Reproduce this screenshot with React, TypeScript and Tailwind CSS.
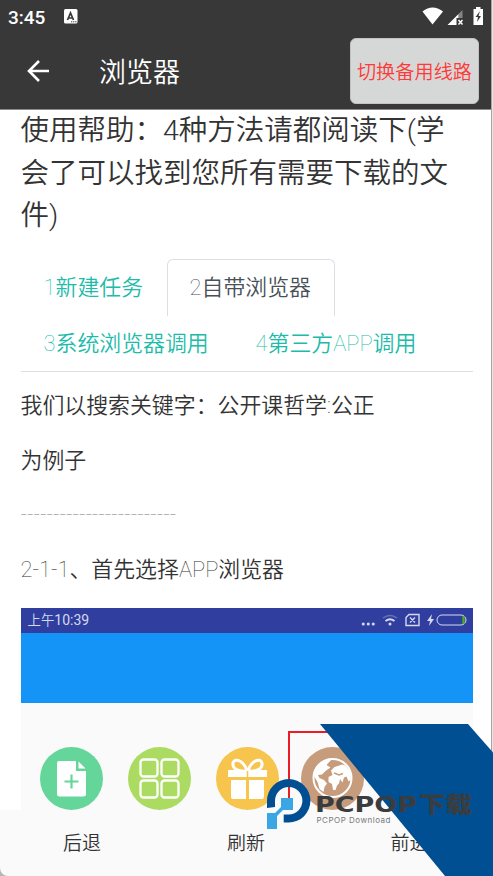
import React from 'react';

const paragraphs = [
    '我们以搜索关键字：公开课哲学:公正',
    '为例子',
    '------------------------',
    '2-1-1、首先选择APP浏览器',
];

// Latin runs are set in Roboto Thin, Chinese runs keep a book weight
const MixedText: React.FC<{ text: string }> = ({ text }) => (
    <span>
        {text.split(/([\x20-\x7e]+)/).filter(Boolean).map((run, i) => (
            <span key={i} className={/^[\x20-\x7e]/.test(run) ? 'font-thin' : 'font-[350]'}>{run}</span>
        ))}
    </span>
);

const StatusIcons: React.FC = () => (
    <svg width="66" height="20" viewBox="0 0 66 20">
        <path d="M1.500 4.500Q11.500-3.500 22 4.500L11.500 17.500Z" fill="#fff" />
        <path d="M41.500 3v8h-4V7Z" fill="#858585" />
        <path d="M26.500 18L37.500 7v4H35.500v7Z" fill="#fff" />
        <path d="M37.500 13l4 4.500m0-4.500l-4 4.500" stroke="#fff" strokeWidth="1.500" />
        <path d="M52.500 2h2.500V0h4.500v2H62v16h-9.500Z" fill="#fff" />
        <path d="M59 4l-4.500 6h2.500l-1 5 4-6h-2.500Z" fill="#383838" />
    </svg>
);

const StatusBar: React.FC = () => (
    <div className="flex h-[34px] items-center justify-between pl-2 pr-[4px] text-white">
        <div className="flex items-center gap-[18px]">
            <span className="w-[38px] text-[19px] font-medium leading-none">3:45</span>
            <svg className="mb-[2px]" width="14" height="15" viewBox="0 0 14 15">
                <rect width="13.500" height="14.500" rx="1.500" fill="#fff" />
                <path d="M3.500 11L6.500 4l3 7M4.500 9h4" stroke="#383838" strokeWidth="1.700" fill="none" />
                <path d="M7 12.800h5.500" stroke="#383838" strokeDasharray="1.300 0.800" />
            </svg>
        </div>
        <StatusIcons />
    </div>
);

const Header: React.FC = () => (
    <header className="h-[110px] shrink-0 border-b border-[#8c8c8c] bg-[#383838]">
        <StatusBar />
        <div className="flex h-[74px] items-center justify-between pl-[27px] pr-3">
            <div className="flex items-center gap-[49px]">
                <svg width="23" height="22" viewBox="0 0 23 22" fill="none" stroke="#fff" strokeWidth="2.600">
                    <path d="M12 1L2 11l10 10M2 11h20" />
                </svg>
                <h1 className="pt-[5px] text-[27px] font-[350] leading-none text-white">浏览器</h1>
            </div>
            <button className="h-[66px] w-[129px] whitespace-nowrap rounded-md border border-[#c2c4c3] bg-[#d6d8d7] pt-1 text-[19.200px] font-[350] leading-none text-[#ff3838]">
                切换备用线路
            </button>
        </div>
    </header>
);

const Tabs: React.FC = () => (
    <div className="flex flex-wrap border-b border-[#dadfe4] text-[21.900px] text-[#1cbbaa]">
        <div className="flex h-[56px] w-[146px] items-center pl-[23px] pt-[2px]"><MixedText text="1新建任务" /></div>
        <div className="flex h-[57px] w-[168px] items-center rounded-t-md border border-b-0 border-[#dadfe4] pl-[22px] text-[#495057]">
            <MixedText text="2自带浏览器" />
        </div>
        <div className="flex h-[55px] w-[212px] items-center pl-[23px] pt-[2px]"><MixedText text="3系统浏览器调用" /></div>
        <div className="flex h-[55px] w-[200px] items-center pl-[23px] pt-[2px]"><MixedText text="4第三方APP调用" /></div>
    </div>
);

const FileIcon: React.FC = () => (
    <svg width="63" height="63" viewBox="0 0 63 63">
        <circle cx="31.500" cy="31.500" r="31.500" fill="#64d69a" />
        <path d="M19 14h17v10h10v23a2.500 2.500 0 0 1-2.500 2.500H19.500A2.500 2.500 0 0 1 17 47V16a2 2 0 0 1 2-2Z" fill="#fff" />
        <path d="M38.500 14.500v7h7Z" fill="#fff" />
        <path d="M31.500 27.500v14m-7-7h14" stroke="#64d69a" strokeWidth="2.200" />
    </svg>
);

const GridIcon: React.FC = () => (
    <svg width="63" height="63" viewBox="0 0 63 63">
        <circle cx="31.500" cy="31.500" r="31.500" fill="#abdb61" />
        <g fill="none" stroke="#fff" strokeWidth="2.300">
            <rect x="12.500" y="12.500" width="17" height="17" rx="3" />
            <rect x="33.500" y="12.500" width="17" height="17" rx="3" />
            <rect x="12.500" y="33.500" width="17" height="17" rx="3" />
            <rect x="33.500" y="33.500" width="17" height="17" rx="3" />
        </g>
    </svg>
);

const GiftIcon: React.FC = () => (
    <svg width="63" height="63" viewBox="0 0 63 63">
        <circle cx="31.500" cy="31.500" r="31.500" fill="#f7c54d" />
        <path d="M12 23h39v7H12ZM15 33h15v19H17a2 2 0 0 1-2-2ZM33 33h15v17a2 2 0 0 1-2 2H33Z" fill="#fff" />
        <path d="M31 24C23 25 16 22 17 16c2-6 11-2 14 8ZM32 24c8 1 15-2 14-8-2-6-11-2-14 8Z" fill="none" stroke="#fff" strokeWidth="3" />
        <path d="M31.500 24v28" stroke="#f7c54d" strokeWidth="1.500" />
    </svg>
);

const GlobeIcon: React.FC = () => (
    <svg width="63" height="63" viewBox="0 0 63 63">
        <circle cx="31.500" cy="31.500" r="31.500" fill="#c69c7d" />
        <circle cx="31.500" cy="31" r="19" fill="none" stroke="#fff" strokeWidth="2" />
        <g fill="#fff">
            <path d="M16 19l6-5 8.500-1.500-5 5.500 4 2.500-5 3.500-3.500 3.500-4 .5 1.500 3 4.500 2 3 3.500-2.500 3.500-1 5-4-3-2-7-3-5-1-5Z" />
            <path d="M30 23.500l3.500-3.500 8-2.500 3 1 4.500 6 1 8-2.500 2-2-5-2.500 1-1.500 5-2.500-3.500-1 4.500-2 2-1.500 4.500h-2.500l-1-6-3.500-2v-5l4-2Z" />
        </g>
        <path d="M33 26l5 2 4-1.500" stroke="#c69c7d" strokeWidth="1.400" fill="none" />
    </svg>
);

const PhonePreview: React.FC = () => (
    <div className="h-[203px] bg-[#fafafa]">
        <div className="flex h-[25px] items-center justify-between bg-[#303f9f] pl-[7px] pr-[6px] text-[#d5d9ee]">
            <span className="text-[13.400px] font-[350] leading-none">上午<span className="text-[14px] font-normal">10:39</span></span>
            <svg width="106" height="16" viewBox="0 0 106 16" fill="none" stroke="#d5d9ee">
                <path d="M2.200 12h10.500" strokeWidth="3" strokeLinecap="round" strokeDasharray="0.100 4.900" />
                <path d="M22 6q7-5 14 0" stroke="#6975bb" strokeWidth="1.500" />
                <path d="M24.500 9q4.500-3.500 9 0" strokeWidth="1.800" />
                <circle cx="29" cy="12" r="1.500" fill="#d5d9ee" stroke="none" />
                <path d="M48 2.500h10v11H45V5.500ZM49 5.500l5 5m0-5l-5 5" strokeWidth="1.400" />
                <path d="M71 2l-5 7h3l-1 5 5-7h-3Z" fill="#d5d9ee" stroke="none" />
                <rect x="76" y="3" width="29" height="10" rx="5" />
                <path d="M102.500 4v8" stroke="#4caf20" strokeWidth="2.200" />
            </svg>
        </div>
        <div className="h-[70px] bg-[#1494f7]" />
        <div className="flex gap-[25px] pl-[19.500px] pt-[44px]">
            <FileIcon />
            <GridIcon />
            <GiftIcon />
            <div className="-ml-[3px]"><GlobeIcon /></div>
        </div>
    </div>
);

const Watermark: React.FC = () => (
    <svg className="absolute left-0 top-0" width="493" height="876" viewBox="0 0 493 876">
        <path d="M340 732H289V800" fill="none" stroke="#ed1c24" strokeWidth="2" />
        <path d="M320 724H468L493 752.500V876H445Z" fill="#004f92" />
        <path d="M267 808V800.800A21.700 21.700 0 1 1 288.700 822.500H283.700V814.500H288.700A13.700 13.700 0 1 0 275 800.800V807Z" fill="#004f92" />
        <path d="M281 798h12v12h-10l-6 6v13h-10v-16h8l6-6Z" fill="#3aa7e4" />
        <text x="315" y="811.500" textLength="102" lengthAdjust="spacingAndGlyphs" fontSize="21.500" fontWeight="700" fill="#3b3c3e" className="font-['DejaVu_Sans',sans-serif]">PCPOP</text>
        <text x="419" y="812" textLength="53" lengthAdjust="spacingAndGlyphs" fontSize="22" fontWeight="900" fill="#3b3c3e">下载</text>
        <text x="316.500" y="823" textLength="74" fontSize="8" fill="#77797b" className="font-['Inter',sans-serif]">PCPOP Download</text>
    </svg>
);

export default function App() {
    return (
        <div className="relative flex h-[876px] w-[493px] overflow-hidden bg-white font-['Roboto','Noto_Sans_CJK_SC',sans-serif]">
            <div className="flex w-[491px] shrink-0 flex-col overflow-hidden">
                <Header />
                <main className="flex h-[700px] shrink-0 flex-col overflow-hidden bg-white pl-[20.500px] pr-[18.500px] text-[#333]">
                    <h2 className="h-[149px] shrink-0 text-[28.500px] font-light leading-[42.700px]">
                        <span className="font-[350]">使用帮助：</span>4<span className="font-[350]">种方法请都阅读下</span>(<span className="font-[350]">学</span><br />
                        <span className="font-[350]">会了可以找到您所有需要下载的文</span><br />
                        <span className="font-[350]">件</span>)
                    </h2>
                    <Tabs />
                    <div className="mt-[7px] text-[21.900px] leading-[54.700px]">
                        {paragraphs.map((text) => (
                            <p key={text} className={text.startsWith('--') ? 'text-[#8a8a8a]' : ''}>
                                <MixedText text={text} />
                            </p>
                        ))}
                    </div>
                    <div className="mt-[10px]">
                        <PhonePreview />
                    </div>
                </main>
                <div className="shrink-0 bg-[#b5b5b5]">
                    <nav className="flex h-[66px] items-center rounded-bl-lg bg-[#fafafa] pt-[3px] text-[19px] font-[350] text-[#333]">
                        <span className="w-[164px] text-center">后退</span>
                        <span className="w-[164px] text-center">刷新</span>
                        <span className="w-[163px] text-center">前进</span>
                    </nav>
                </div>
            </div>
            <div className="w-[2px] border-l border-[#a6a6a6] bg-[#e4e4e4]" />
            <Watermark />
        </div>
    );
}
